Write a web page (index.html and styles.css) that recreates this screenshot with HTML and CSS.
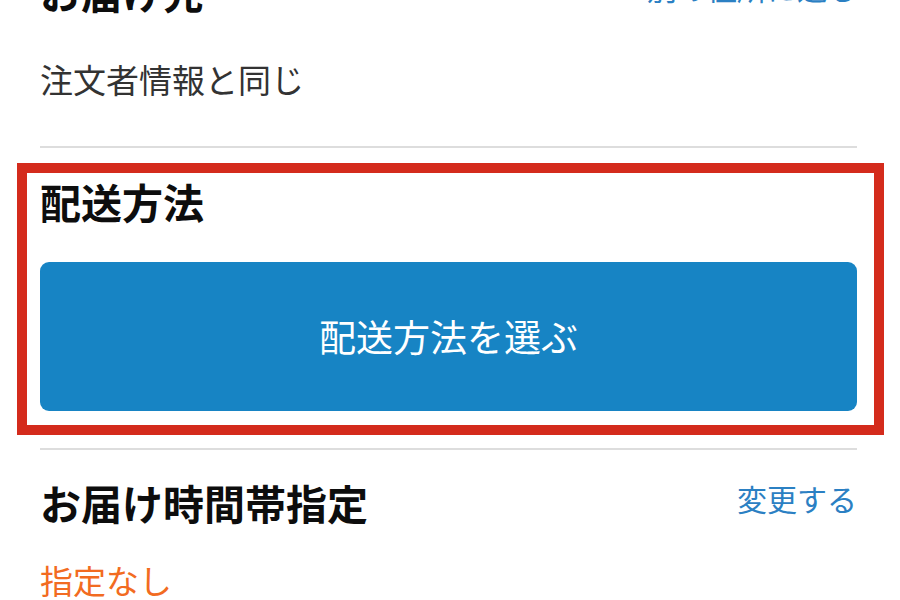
FILE: index.html
```html
<!DOCTYPE html>
<html lang="ja">
<head>
<meta charset="utf-8">
<title>配送方法</title>
<link rel="stylesheet" href="styles.css">
</head>
<body>
<div class="page">
  <section class="block block-address">
    <div class="row">
      <h2 class="heading">お届け先</h2>
      <a class="link">別の住所に送る</a>
    </div>
    <p class="value">注文者情報と同じ</p>
  </section>
  <hr class="sep sep-1">
  <section class="highlight">
    <h2 class="heading">配送方法</h2>
    <button class="select-btn" type="button">配送方法を選ぶ</button>
  </section>
  <hr class="sep sep-2">
  <section class="block block-time">
    <div class="row">
      <h2 class="heading">お届け時間帯指定</h2>
      <a class="link">変更する</a>
    </div>
    <p class="value value-warn">指定なし</p>
  </section>
</div>
</body>
</html>
```

FILE: styles.css
```css
html, body {
  margin: 0;
  padding: 0;
  background: #ffffff;
  overflow: hidden;
}
body {
  width: 900px;
  height: 600px;
  font-family: "Noto Sans CJK JP", "Noto Sans", sans-serif;
  color: #111111;
}
.page {
  margin-top: -29px;
  display: flex;
  flex-direction: column;
}
.block {
  padding: 0 43px 0 40px;
}
.row {
  display: flex;
  justify-content: space-between;
  align-items: flex-start;
  height: 40px;
}
.heading {
  margin: 0;
  font-size: 41px;
  line-height: 40px;
  font-weight: 700;
  color: #0d0d0d;
  white-space: nowrap;
}
.link {
  font-size: 30px;
  line-height: 30px;
  color: #2b80c3;
  white-space: nowrap;
  margin-top: 1px;
}
.value {
  margin: 52px 0 0;
  font-size: 33px;
  line-height: 33px;
  color: #333333;
}
.value-warn {
  margin-top: 42px;
  color: #f26b21;
}
.sep {
  border: 0;
  height: 2px;
  background: #dddddd;
  margin: 0 43px 0 40px;
}
.sep-1 {
  margin-top: 50px;
}
.highlight {
  margin: 15px 16px 0 17px;
  border: 10px solid #d42b1c;
  padding: 8px 17px 14px 13px;
  display: flex;
  flex-direction: column;
}
.select-btn {
  margin-top: 41px;
  height: 149px;
  border: 0;
  border-radius: 9px;
  background: #1784c4;
  color: #ffffff;
  font-family: "Noto Sans CJK JP", "Noto Sans", sans-serif;
  font-size: 37px;
  line-height: 37px;
  font-weight: 400;
  padding: 0;
}
.sep-2 {
  margin-top: 13px;
}
.block-time {
  margin-top: 32px;
}
```
